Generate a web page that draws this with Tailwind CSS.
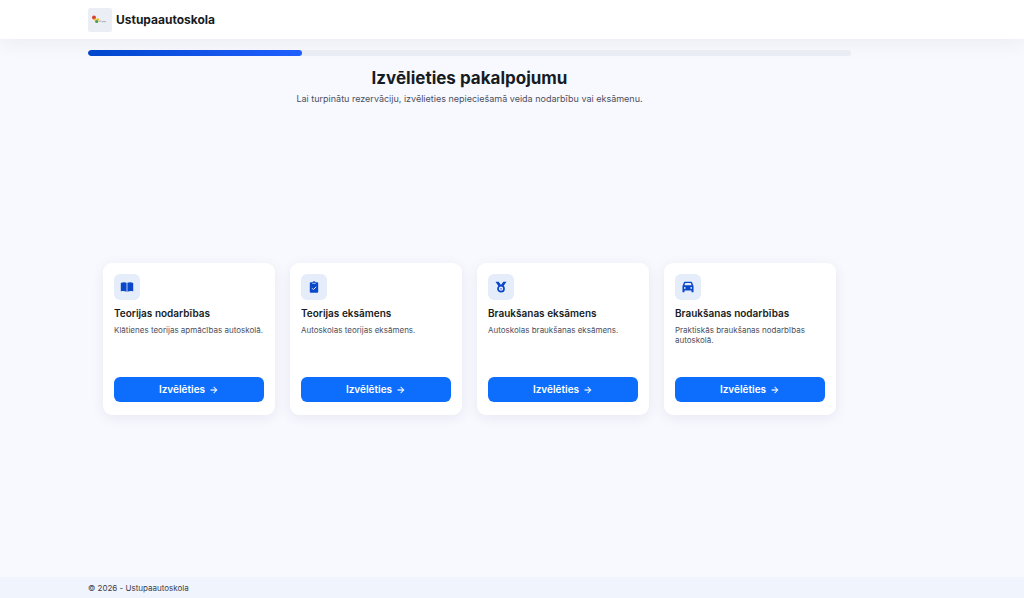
<!DOCTYPE html>
<html lang="lv">
<head>
<meta charset="utf-8">
<meta name="viewport" content="width=device-width, initial-scale=1">
<title>Ustupaautoskola</title>
<script src="https://cdn.jsdelivr.net/npm/@tailwindcss/browser@4"></script>
</head>
<body class="flex min-h-screen flex-col bg-[#f8f9ff] font-['Inter',sans-serif] text-[#171c22]">
<header class="flex h-[39px] items-center bg-white pl-[88px] shadow-[0_4px_20px_rgba(23,28,34,0.06)]">
  <a href="#" class="flex items-center gap-1">
    <span class="flex size-6 items-center justify-center rounded-xs bg-[#eceef6]">
      <svg class="size-6" viewBox="0 0 24 24" aria-hidden="true">
        <circle cx="6" cy="9.500" r="2" fill="#d8412f"/>
        <circle cx="9.800" cy="11.600" r="1.400" fill="#eec22f"/>
        <circle cx="7.200" cy="11.600" r="1.200" fill="#eec22f"/>
        <circle cx="8.700" cy="13.500" r="1.600" fill="#4c9a4a"/>
        <path d="M11 13.200h2.200M13.600 13.600h4.400" stroke="#b5b9c0" stroke-width="1.200"/>
      </svg>
    </span>
    <span class="text-[12px] leading-4 font-bold">Ustupaautoskola</span>
  </a>
</header>

<main class="flex flex-1 flex-col pt-[11px] pr-[173px] pl-[88px]">
  <div class="h-[6px] overflow-hidden rounded-full bg-[#e9ecf3]" role="progressbar" aria-valuenow="28" aria-valuemin="0" aria-valuemax="100" aria-label="Rezervācijas gaita">
    <div class="h-full rounded-full bg-linear-to-r from-[#0047cc] to-[#1f5fff]" style="width:28%"></div>
  </div>
  <div class="pt-[10px] text-center">
    <h1 class="text-[17px] leading-6 font-bold">Izvēlieties pakalpojumu</h1>
    <p class="mt-[3px] text-[9px] leading-3 text-[#4b4f60]">Lai turpinātu rezervāciju, izvēlieties nepieciešamā veida nodarbību vai eksāmenu.</p>
  </div>

  <div class="flex flex-1 items-center px-[15px] pb-1">
    <div class="grid w-full grid-cols-4 gap-[15px]">
      <article class="flex min-h-[152px] flex-col rounded-[9px] bg-white px-[11px] pt-[11px] pb-[13px] shadow-[0_3px_14px_rgba(23,28,60,0.07)]">
        <span class="flex size-[26px] items-center justify-center rounded-md bg-[#e5edfb] text-[#0a47c9]">
          <svg class="size-[14px]" viewBox="0 0 14 14" fill="currentColor" aria-hidden="true"><path d="M.8 2.900C2.800 2.100 5 2.100 6.600 2.800v9C5 11.100 2.800 10.700.8 11.400zM13.200 2.900C11.200 2.100 9 2.100 7.400 2.800v9C9 11.100 11.200 10.700 13.200 11.400z"/></svg>
        </span>
        <h2 class="mt-[6px] text-[10px] leading-[14px] font-semibold">Teorijas nodarbības</h2>
        <p class="mt-[5px] text-[8px] leading-[10px] text-[#4b4f60]">Klātienes teorijas apmācības autoskolā.</p>
        <button type="button" class="mt-auto flex h-[25px] items-center justify-center gap-1 rounded-md bg-[#0d6efd] text-[10px] font-semibold text-white">Izvēlēties <svg class="size-[10px]" viewBox="0 0 24 24" fill="currentColor" aria-hidden="true"><path d="M12 4l-1.410 1.410L16.170 11H4v2h12.170l-5.580 5.590L12 20l8-8z" stroke="currentColor" stroke-width=".5"/></svg></button>
      </article>
      <article class="flex min-h-[152px] flex-col rounded-[9px] bg-white px-[11px] pt-[11px] pb-[13px] shadow-[0_3px_14px_rgba(23,28,60,0.07)]">
        <span class="flex size-[26px] items-center justify-center rounded-md bg-[#e5edfb] text-[#0a47c9]">
          <svg class="size-[12px]" viewBox="0 0 12 12" aria-hidden="true"><path fill="currentColor" d="M2.700 1.300h1.800a1.600 1.600 0 0 1 3 0h1.800q.9 0 .9.900v8.600q0 .9-.9.900H2.700q-.9 0-.9-.9V2.200q0-.9.900-.9z"/><path d="M4.300 2.400h3.400" stroke="#e5edfb" stroke-width=".7"/><path d="M4 7.200l1.400 1.400L8.200 5.800" fill="none" stroke="#e5edfb" stroke-width="1"/></svg>
        </span>
        <h2 class="mt-[6px] text-[10px] leading-[14px] font-semibold">Teorijas eksāmens</h2>
        <p class="mt-[5px] text-[8px] leading-[10px] text-[#4b4f60]">Autoskolas teorijas eksāmens.</p>
        <button type="button" class="mt-auto flex h-[25px] items-center justify-center gap-1 rounded-md bg-[#0d6efd] text-[10px] font-semibold text-white">Izvēlēties <svg class="size-[10px]" viewBox="0 0 24 24" fill="currentColor" aria-hidden="true"><path d="M12 4l-1.410 1.410L16.170 11H4v2h12.170l-5.580 5.590L12 20l8-8z" stroke="currentColor" stroke-width=".5"/></svg></button>
      </article>
      <article class="flex min-h-[152px] flex-col rounded-[9px] bg-white px-[11px] pt-[11px] pb-[13px] shadow-[0_3px_14px_rgba(23,28,60,0.07)]">
        <span class="flex size-[26px] items-center justify-center rounded-md bg-[#e5edfb] text-[#0a47c9]">
          <svg class="size-[12px]" viewBox="0 0 12 12" aria-hidden="true"><path fill="currentColor" d="M.5.700h3.200L6 3.900 8.300.700h3.200L8.600 4.900H3.400z"/><path fill="#e5edfb" d="M4.900.700h2.200L6 2.300z"/><circle cx="6" cy="7.700" r="3" fill="#e5edfb" stroke="currentColor" stroke-width="1.700"/><circle cx="6" cy="7.700" r=".7" fill="currentColor"/></svg>
        </span>
        <h2 class="mt-[6px] text-[10px] leading-[14px] font-semibold">Braukšanas eksāmens</h2>
        <p class="mt-[5px] text-[8px] leading-[10px] text-[#4b4f60]">Autoskolas braukšanas eksāmens.</p>
        <button type="button" class="mt-auto flex h-[25px] items-center justify-center gap-1 rounded-md bg-[#0d6efd] text-[10px] font-semibold text-white">Izvēlēties <svg class="size-[10px]" viewBox="0 0 24 24" fill="currentColor" aria-hidden="true"><path d="M12 4l-1.410 1.410L16.170 11H4v2h12.170l-5.580 5.590L12 20l8-8z" stroke="currentColor" stroke-width=".5"/></svg></button>
      </article>
      <article class="flex min-h-[152px] flex-col rounded-[9px] bg-white px-[11px] pt-[11px] pb-[13px] shadow-[0_3px_14px_rgba(23,28,60,0.07)]">
        <span class="flex size-[26px] items-center justify-center rounded-md bg-[#e5edfb] text-[#0a47c9]">
          <svg class="size-[14px]" viewBox="0 0 24 24" fill="currentColor" aria-hidden="true"><path fill-rule="evenodd" d="M18.920 4.010C18.720 3.420 18.160 3 17.500 3h-11c-.66 0-1.210.42-1.420 1.010L2.500 10.500V20c0 .55.450 1 1 1h1.500c.55 0 1-.45 1-1v-2h12v2c0 .55.450 1 1 1h1.500c.55 0 1-.45 1-1v-9.500zM6.500 15a1.500 1.500 0 1 1 0-3 1.500 1.500 0 0 1 0 3zm11 0a1.500 1.500 0 1 1 0-3 1.500 1.500 0 0 1 0 3zM5.800 9l1.400-3.700h9.600L18.200 9z"/></svg>
        </span>
        <h2 class="mt-[6px] text-[10px] leading-[14px] font-semibold">Braukšanas nodarbības</h2>
        <p class="mt-[5px] text-[8px] leading-[10px] text-[#4b4f60]">Praktiskās braukšanas nodarbības autoskolā.</p>
        <button type="button" class="mt-auto flex h-[25px] items-center justify-center gap-1 rounded-md bg-[#0d6efd] text-[10px] font-semibold text-white">Izvēlēties <svg class="size-[10px]" viewBox="0 0 24 24" fill="currentColor" aria-hidden="true"><path d="M12 4l-1.410 1.410L16.170 11H4v2h12.170l-5.580 5.590L12 20l8-8z" stroke="currentColor" stroke-width=".5"/></svg></button>
      </article>
    </div>
  </div>
</main>

<footer class="flex h-[21px] items-center bg-[#f0f4fc] pl-[88px] text-[8px] leading-3 text-[#3a3f4c]">© 2026 - Ustupaautoskola</footer>
</body>
</html>
